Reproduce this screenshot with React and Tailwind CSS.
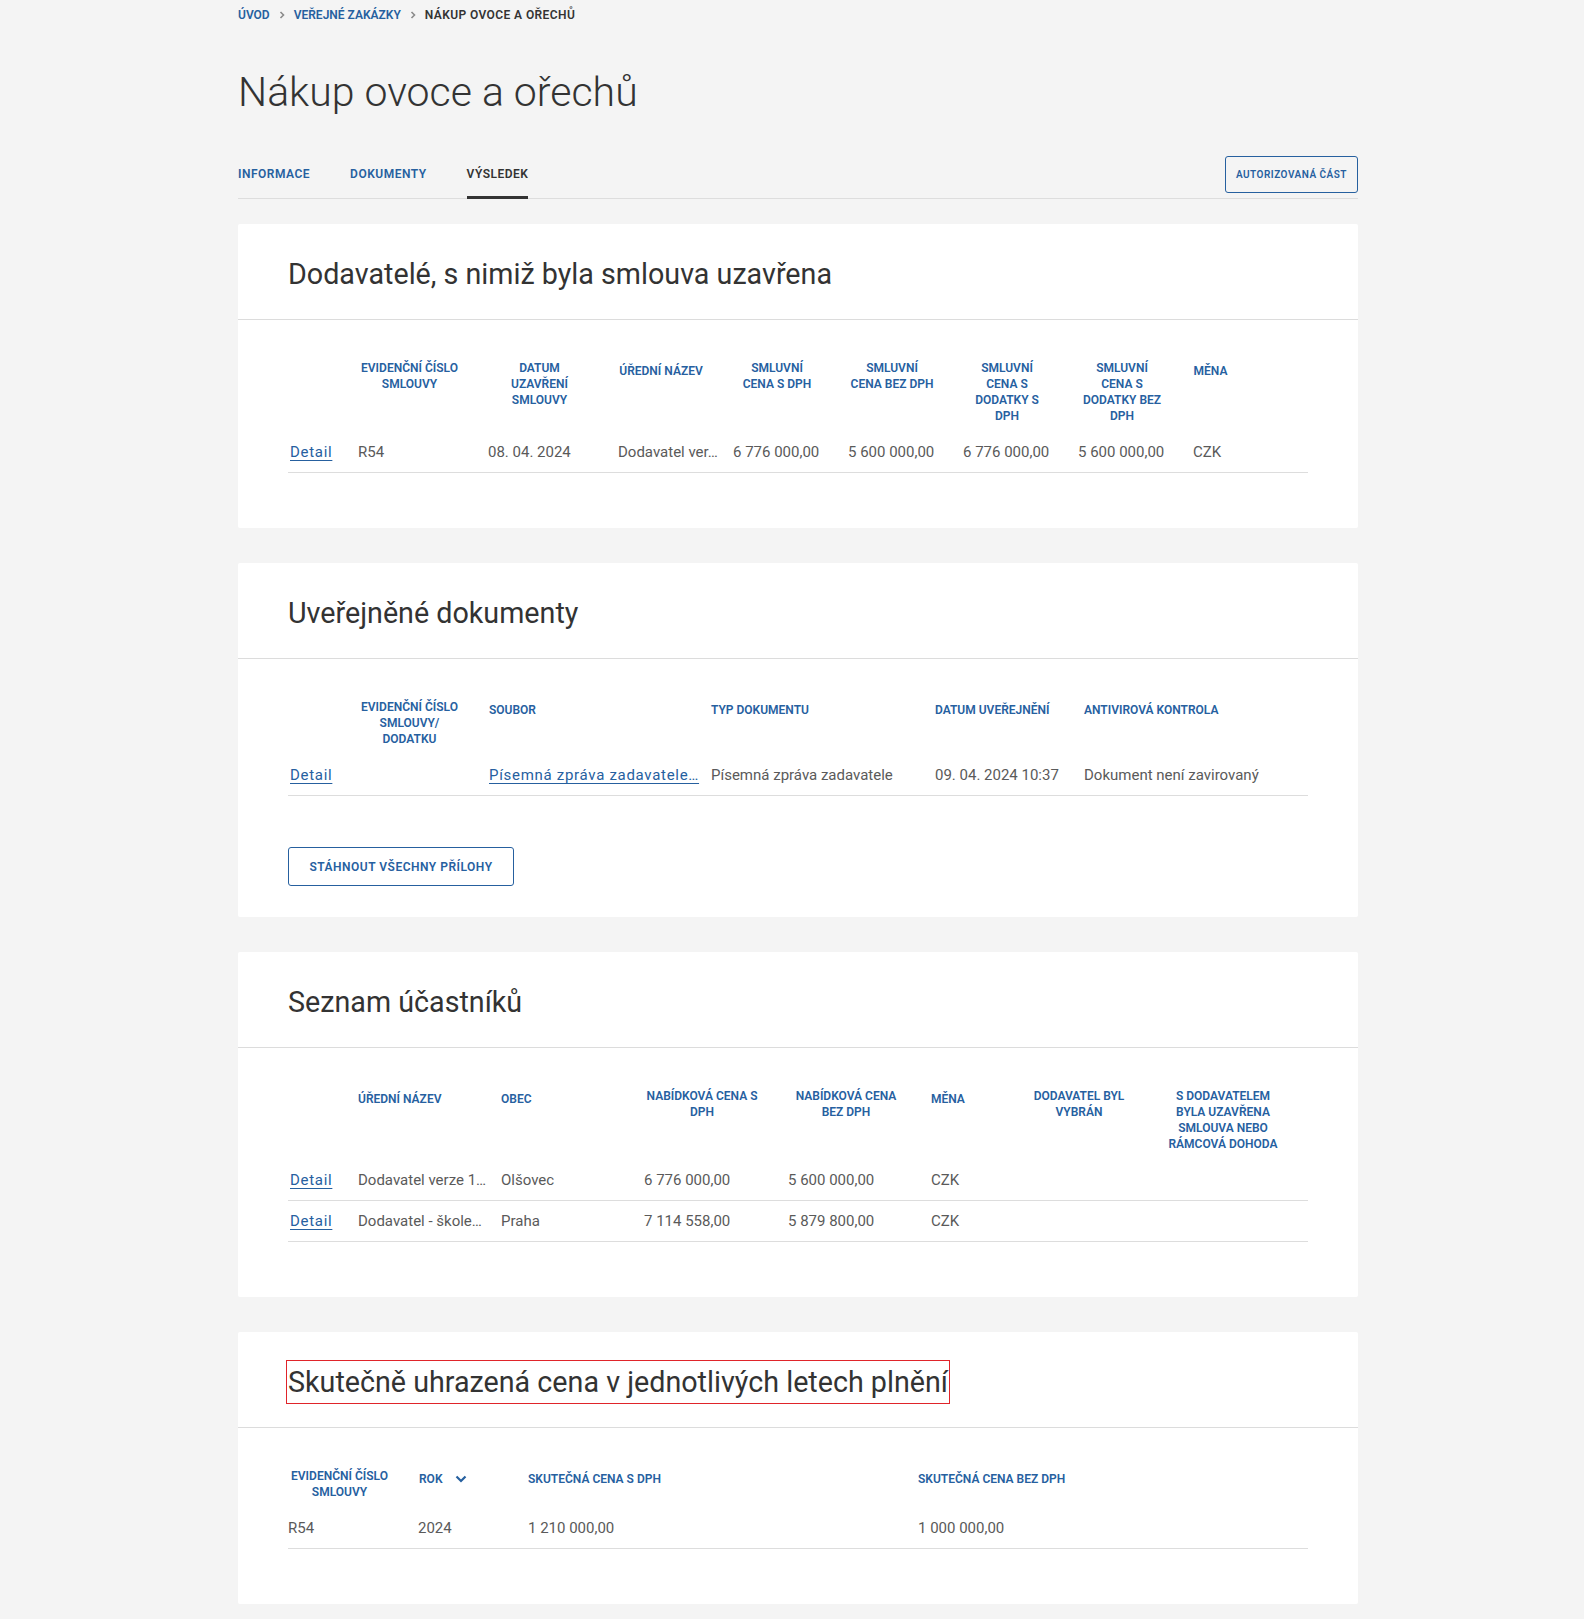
import React from "react";

const font = { fontFamily: "Roboto, 'Noto Sans', Arial, sans-serif" };

const Crumb = () => (
  <svg width="8" height="10" viewBox="0 0 8 10" className="mx-[8px]">
    <path d="M2.5 2 L5.5 5 L2.5 8" fill="none" stroke="#8a8a8a" strokeWidth="1.6" />
  </svg>
);

const Head = ({ children, w, center, shift }) => (
  <div className={`flex items-center min-h-[22px] ${shift ? "pl-[2px]" : ""}`}>
    <div
      className={`text-[12px] leading-[16px] font-semibold uppercase text-[#26609f] ${
        center ? "text-center" : ""
      }`}
      style={w ? { width: w } : undefined}
    >
      {children}
    </div>
  </div>
);

const Cell = ({ children }) => (
  <div className="pr-[12px] whitespace-nowrap text-[15px] text-[#5a5a5a]">{children}</div>
);

const Link = ({ children }) => (
  <div className="pl-[2px] pr-[12px] whitespace-nowrap">
    <a href="#" className="text-[15px] tracking-[0.7px] text-[#26609f] underline underline-offset-[3px]">
      {children}
    </a>
  </div>
);

const Card = ({ title, marked, children, last }) => (
  <div className="bg-white rounded-[2px]">
    <div className="px-[50px] pt-[30px] pb-[25px] border-b border-[#dcdcdc]">
      <h2
        className={`text-[28.7px] leading-[40px] text-[#333333] ${
          marked ? "inline-block outline outline-1 outline-[#e0242a] outline-offset-[1px]" : ""
        }`}
      >
        {title}
      </h2>
    </div>
    <div className={`px-[50px] pt-[40px] ${last ? "pb-[31px]" : "pb-[55px]"}`}>{children}</div>
  </div>
);

const row = "h-[41px] items-center border-b border-[#dddddd]";

export default function App() {
  return (
    <div className="min-h-screen bg-[#f4f4f4] pb-[15px]" style={font}>
      <div className="ml-[238px] w-[1120px]">
        {/* breadcrumb */}
        <div className="pt-[7px] flex items-center text-[12px] leading-[16px] font-semibold uppercase">
          <a href="#" className="text-[#26609f]">Úvod</a>
          <Crumb />
          <a href="#" className="text-[#26609f]">Veřejné zakázky</a>
          <Crumb />
          <span className="text-[#333333] tracking-[0.4px]">Nákup ovoce a ořechů</span>
        </div>

        <h1 className="mt-[44px] text-[41px] leading-[50px] font-light text-[#333333]">
          Nákup ovoce a ořechů
        </h1>

        {/* tabs */}
        <div className="mt-[39px] flex items-end justify-between border-b border-[#dddddd]">
          <div className="flex gap-[40px] text-[12px] leading-[16px] font-semibold tracking-[0.5px] uppercase">
            <a href="#" className="pb-[14px] border-b-[3px] border-transparent -mb-px text-[#26609f]">Informace</a>
            <a href="#" className="pb-[14px] border-b-[3px] border-transparent -mb-px text-[#26609f]">Dokumenty</a>
            <a href="#" className="pb-[14px] border-b-[3px] border-[#333333] -mb-px text-[#333333]">Výsledek</a>
          </div>
          <button className="mb-[5px] h-[37px] px-[10px] border border-[#26609f] rounded-[3px] text-[10px] font-semibold tracking-[0.5px] uppercase text-[#26609f]">
            Autorizovaná část
          </button>
        </div>

        <div className="mt-[25px] flex flex-col gap-[35px]">
          {/* card 1 */}
          <Card title="Dodavatelé, s nimiž byla smlouva uzavřena">
            <div className="grid grid-cols-[70px_130px_130px_115px_115px_115px_115px_115px_1fr] items-start pb-[8px]">
              <div />
              <Head w={99} center shift>Evidenční číslo smlouvy</Head>
              <Head w={99} center shift>Datum uzavření smlouvy</Head>
              <Head w={86} center>Úřední název</Head>
              <Head w={84} center shift>Smluvní cena s DPH</Head>
              <Head w={84} center shift>Smluvní cena bez DPH</Head>
              <Head w={84} center shift>Smluvní cena s dodatky s DPH</Head>
              <Head w={84} center shift>Smluvní cena s dodatky bez DPH</Head>
              <Head w={35} center>Měna</Head>
            </div>
            <div className={`grid grid-cols-[70px_130px_130px_115px_115px_115px_115px_115px_1fr] ${row}`}>
              <Link>Detail</Link>
              <Cell>R54</Cell>
              <Cell>08. 04. 2024</Cell>
              <Cell>Dodavatel ver…</Cell>
              <Cell>6 776 000,00</Cell>
              <Cell>5 600 000,00</Cell>
              <Cell>6 776 000,00</Cell>
              <Cell>5 600 000,00</Cell>
              <Cell>CZK</Cell>
            </div>
          </Card>

          {/* card 2 */}
          <Card title="Uveřejněné dokumenty" last>
            <div className="grid grid-cols-[70px_131px_222px_224px_149px_1fr] items-start pb-[8px]">
              <div />
              <Head w={99} center shift>Evidenční číslo smlouvy/ dodatku</Head>
              <Head>Soubor</Head>
              <Head>Typ dokumentu</Head>
              <Head>Datum uveřejnění</Head>
              <Head>Antivirová kontrola</Head>
            </div>
            <div className={`grid grid-cols-[70px_131px_222px_224px_149px_1fr] ${row}`}>
              <Link>Detail</Link>
              <Cell></Cell>
              <div className="pr-[10px] whitespace-nowrap">
                <a href="#" className="text-[15px] tracking-[0.7px] text-[#26609f] underline underline-offset-[3px]">
                  Písemná zpráva zadavatele…
                </a>
              </div>
              <Cell>Písemná zpráva zadavatele</Cell>
              <Cell>09. 04. 2024 10:37</Cell>
              <Cell>Dokument není zavirovaný</Cell>
            </div>
            <button className="mt-[51px] h-[39px] w-[226px] border border-[#26609f] rounded-[3px] text-[12px] font-semibold tracking-[0.5px] uppercase text-[#26609f]">
              Stáhnout všechny přílohy
            </button>
          </Card>

          {/* card 3 */}
          <Card title="Seznam účastníků">
            <div className="grid grid-cols-[70px_143px_143px_144px_143px_90px_144px_1fr] items-start pb-[8px]">
              <div />
              <Head>Úřední název</Head>
              <Head>Obec</Head>
              <Head w={116} center>Nabídková cena s DPH</Head>
              <Head w={116} center>Nabídková cena bez DPH</Head>
              <Head>Měna</Head>
              <Head w={116} center>Dodavatel byl vybrán</Head>
              <Head w={116} center>S dodavatelem byla uzavřena smlouva nebo rámcová dohoda</Head>
            </div>
            <div className={`grid grid-cols-[70px_143px_143px_144px_143px_90px_144px_1fr] ${row}`}>
              <Link>Detail</Link>
              <Cell>Dodavatel verze 1…</Cell>
              <Cell>Olšovec</Cell>
              <Cell>6 776 000,00</Cell>
              <Cell>5 600 000,00</Cell>
              <Cell>CZK</Cell>
              <Cell></Cell>
              <Cell></Cell>
            </div>
            <div className={`grid grid-cols-[70px_143px_143px_144px_143px_90px_144px_1fr] ${row}`}>
              <Link>Detail</Link>
              <Cell>Dodavatel - škole…</Cell>
              <Cell>Praha</Cell>
              <Cell>7 114 558,00</Cell>
              <Cell>5 879 800,00</Cell>
              <Cell>CZK</Cell>
              <Cell></Cell>
              <Cell></Cell>
            </div>
          </Card>

          {/* card 4 */}
          <Card title="Skutečně uhrazená cena v jednotlivých letech plnění" marked>
            <div className="grid grid-cols-[130px_110px_390px_1fr] items-start pb-[8px]">
              <Head w={99} center shift>Evidenční číslo smlouvy</Head>
              <div className="flex items-center min-h-[22px] pl-px">
                <span className="text-[12px] leading-[16px] font-semibold uppercase text-[#26609f]">Rok</span>
                <svg width="12" height="8" viewBox="0 0 12 8" className="ml-[12px]">
                  <path d="M1.5 1.5 L6 6 L10.5 1.5" fill="none" stroke="#26609f" strokeWidth="2.2" />
                </svg>
              </div>
              <Head>Skutečná cena s DPH</Head>
              <Head>Skutečná cena bez DPH</Head>
            </div>
            <div className={`grid grid-cols-[130px_110px_390px_1fr] ${row}`}>
              <Cell>R54</Cell>
              <Cell>2024</Cell>
              <Cell>1 210 000,00</Cell>
              <Cell>1 000 000,00</Cell>
            </div>
          </Card>
        </div>
      </div>
    </div>
  );
}
